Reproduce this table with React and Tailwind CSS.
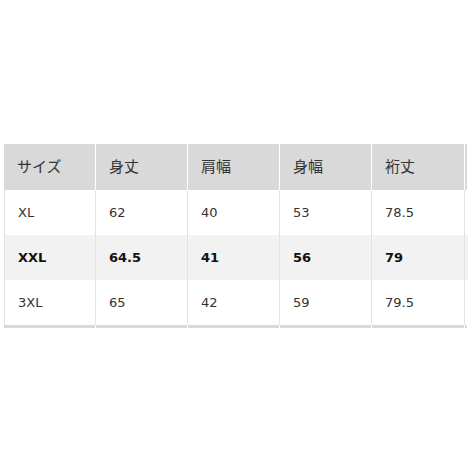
import React from 'react';

const headers = ['サイズ', '身丈', '肩幅', '身幅', '裄丈'];

const rows = [
  { cells: ['XL', '62', '40', '53', '78.5'], bold: false },
  { cells: ['XXL', '64.5', '41', '56', '79'], bold: true },
  { cells: ['3XL', '65', '42', '59', '79.5'], bold: false },
];

const widths = ['w-[92px]', 'w-[92px]', 'w-[92px]', 'w-[92px]', 'w-[93px]'];

export default function App() {
  return (
    <div
      className="w-[471px] h-[471px] bg-white overflow-hidden pt-[144px] pl-[4px]"
      style={{ fontFamily: '"DejaVu Sans", "Noto Sans CJK JP", sans-serif' }}
    >
      {/* header */}
      <div className="flex h-[46px]">
        {headers.map((h, i) => (
          <div
            key={h}
            className={`${widths[i]} shrink-0 bg-[#d9d9d9] border-r border-white flex items-center pl-[13px] text-[15px] text-[#333]`}
          >
            {h}
          </div>
        ))}
        <div className="w-[2px] shrink-0 bg-[#d9d9d9]" />
      </div>

      {/* body */}
      {rows.map((r, ri) => (
        <div
          key={ri}
          className={`flex h-[45px] w-[464px] ${r.bold ? 'bg-[#f2f2f2]' : 'bg-white'}`}
        >
          {r.cells.map((c, i) => (
            <div
              key={i}
              className={`${widths[i]} shrink-0 flex items-center pl-[13px] text-[13px] border-r border-[#e3e3e3] ${
                i === 0 ? 'border-l' : ''
              } ${r.bold ? 'font-bold text-[#111]' : 'text-[#333]'}`}
            >
              {c}
            </div>
          ))}
        </div>
      ))}

      {/* bottom bar */}
      <div className="flex h-[3px]">
        {widths.map((w, i) => (
          <div key={i} className={`${w} shrink-0 bg-[#d9d9d9] border-r border-white`} />
        ))}
        <div className="w-[2px] shrink-0 bg-[#d9d9d9]" />
      </div>
    </div>
  );
}
